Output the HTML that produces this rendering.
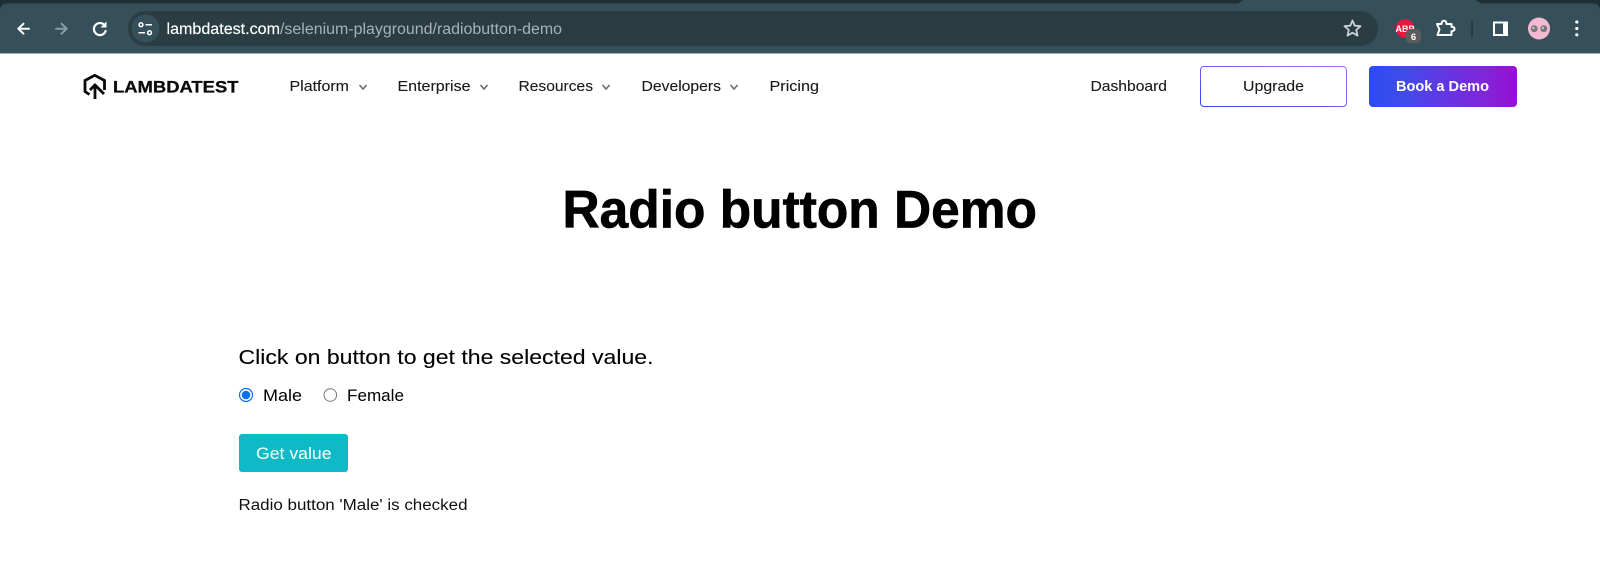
<!DOCTYPE html>
<html><head><meta charset="utf-8"><style>
html,body{margin:0;padding:0;background:#fff;width:1600px;height:564px;overflow:hidden}
svg{display:block}
text{font-family:"Liberation Sans",sans-serif}
</style></head><body>
<svg width="1600" height="564" viewBox="0 0 1600 564" xmlns="http://www.w3.org/2000/svg">
<defs>
<linearGradient id="g" x1="0" x2="1" y1="0" y2="0"><stop offset="0" stop-color="#2b4cf2"/><stop offset=".25" stop-color="#424bea"/><stop offset=".5" stop-color="#6236e3"/><stop offset=".75" stop-color="#7d28dc"/><stop offset="1" stop-color="#990ed2"/></linearGradient>
<linearGradient id="b" x1="0" x2="1" y1="1" y2="0"><stop offset="0" stop-color="#2b4cf2"/><stop offset=".55" stop-color="#7a5cf0"/><stop offset="1" stop-color="#b16be8"/></linearGradient>
</defs>
<rect width="1600" height="53" fill="#35505b"/>
<path d="M0 0H1243L1238 3.500H8Q0 3.500 0 11Z" fill="#1f3035"/>
<path d="M1475 0H1600V11Q1600 3.500 1592 3.500H1481Z" fill="#1f3035"/>
<rect y="52.500" width="1600" height="1" fill="#3f5963"/>
<rect x="128" y="11" width="1250" height="35" rx="17.500" fill="#2a3d43"/>
<circle cx="145.500" cy="28.500" r="14" fill="#35505b"/>
<g fill="none" stroke="#fff" stroke-width="2" stroke-linecap="round" stroke-linejoin="round">
<path d="M29 28.700H18.500M23.500 23.700L18.300 28.700L23.500 33.700"/>
<path d="M56 28.700H66.500M61.500 23.700L66.700 28.700L61.500 33.700" stroke="#8b9da3"/>
<path d="M104.600 25.300A6 6 0 1 0 105.600 31" stroke-width="2.200"/>
</g>
<path d="M106.500 21.500V27.500H100.500Z" fill="#fff"/>
<g fill="none" stroke="#fff" stroke-width="1.500">
<circle cx="141" cy="24.700" r="1.900"/><path d="M145.500 24.700H152M138.500 32.700H145"/><circle cx="149.500" cy="32.700" r="1.900"/>
</g>
<text x="166.500" y="34" font-size="15.300" fill="#fff" stroke="#fff" stroke-width=".15" textLength="113.500" lengthAdjust="spacingAndGlyphs">lambdatest.com</text>
<text x="280" y="34" font-size="15.300" fill="#a6b2b6" textLength="282" lengthAdjust="spacingAndGlyphs">/selenium-playground/radiobutton-demo</text>
<path d="M1352.500 20.500L1354.700 25.700L1360.500 26.200L1356.200 30L1357.500 35.600L1352.500 32.700L1347.500 35.600L1348.800 30L1344.500 26.200L1350.300 25.700Z" fill="none" stroke="#c9d1d4" stroke-width="1.800" stroke-linejoin="round"/>
<circle cx="1405" cy="28.500" r="9.300" fill="#e8173f"/>
<text x="1405" y="32" font-size="9" font-weight="700" fill="#fff" text-anchor="middle">ABP</text>
<rect x="1406" y="29" width="15" height="14" rx="4" fill="#5c5c5c"/>
<text x="1413.500" y="40" font-size="9.500" font-weight="700" fill="#fff" text-anchor="middle">6</text>
<path d="M1437 24H1441.500Q1441.800 20.800 1444 20.800Q1446.300 20.800 1446.500 24H1451.500V26.800Q1454.500 27 1454.500 29Q1454.500 31 1451.500 31.200V35H1437.500L1439.500 29.500Z" fill="none" stroke="#fff" stroke-width="2" stroke-linejoin="round"/>
<rect x="1471.300" y="20" width="1.500" height="17.500" fill="#22373e"/>
<rect x="1494" y="22.500" width="13" height="12.500" fill="none" stroke="#fff" stroke-width="2"/>
<rect x="1503" y="22.500" width="5" height="12.500" fill="#fff"/>
<circle cx="1539" cy="28.500" r="11" fill="#f3b9d1"/>
<circle cx="1534.200" cy="28.700" r="3.400" fill="#767676"/><circle cx="1543.800" cy="28.700" r="3.400" fill="#767676"/>
<circle cx="1533.500" cy="28" r="1.200" fill="#c8c8c8"/><circle cx="1543" cy="28" r="1.200" fill="#c8c8c8"/>
<circle cx="1576.800" cy="22" r="1.600" fill="#fff"/><circle cx="1576.800" cy="28.500" r="1.600" fill="#fff"/><circle cx="1576.800" cy="34.800" r="1.600" fill="#fff"/>

<path d="M89.500 94.500L85 91.500V80.500L94.700 75.300L104.500 80.500V90" fill="none" stroke="#0a0a0a" stroke-width="2.800" stroke-linejoin="miter"/>
<path d="M95 99V85.500M90 90L95 85L104 94" fill="none" stroke="#0a0a0a" stroke-width="2.800"/>
<text x="113" y="92.500" font-size="17" font-weight="700" fill="#0a0a0a" stroke="#0a0a0a" stroke-width=".3" textLength="125.500" lengthAdjust="spacingAndGlyphs">LAMBDATEST</text>

<rect x="1200.500" y="66.500" width="146" height="40" rx="3.500" fill="#fff" stroke="url(#b)" stroke-width="1"/>
<g font-size="15" fill="#1a1a1a" stroke="#1a1a1a" stroke-width=".12">
<text x="289.500" y="91" textLength="59.500" lengthAdjust="spacingAndGlyphs">Platform</text>
<text x="397.500" y="91" textLength="73" lengthAdjust="spacingAndGlyphs">Enterprise</text>
<text x="518.500" y="91" textLength="74.500" lengthAdjust="spacingAndGlyphs">Resources</text>
<text x="641.500" y="91" textLength="79.500" lengthAdjust="spacingAndGlyphs">Developers</text>
<text x="769.500" y="91" textLength="49.500" lengthAdjust="spacingAndGlyphs">Pricing</text>
<text x="1090.500" y="91" textLength="76.500" lengthAdjust="spacingAndGlyphs">Dashboard</text>
<text x="1243" y="91" textLength="61" lengthAdjust="spacingAndGlyphs">Upgrade</text>
</g>
<g fill="none" stroke="#6c6c6c" stroke-width="1.600">
<path d="M359.500 85L363 89L366.500 85"/><path d="M480.500 85L484 89L487.500 85"/><path d="M602.500 85L606 89L609.500 85"/><path d="M730.500 85L734 89L737.500 85"/>
</g>
<rect x="1369" y="66" width="148" height="41" rx="4" fill="url(#g)"/>
<text x="1396" y="91" font-size="15" font-weight="700" fill="#fff" textLength="93" lengthAdjust="spacingAndGlyphs">Book a Demo</text>

<text x="562.500" y="227.700" font-size="53" font-weight="700" fill="#000" stroke="#000" stroke-width=".7" textLength="474.500" lengthAdjust="spacingAndGlyphs">Radio button Demo</text>

<text x="238.500" y="364" font-size="20.500" fill="#000" stroke="#000" stroke-width=".1" textLength="415" lengthAdjust="spacingAndGlyphs">Click on button to get the selected value.</text>
<circle cx="246" cy="395" r="6.500" fill="#fff" stroke="#0b6ff5" stroke-width="1.200"/>
<circle cx="246" cy="395" r="4.300" fill="#0b6ff5"/>
<text x="263" y="401" font-size="16.500" fill="#000" textLength="39" lengthAdjust="spacingAndGlyphs">Male</text>
<circle cx="330.300" cy="395" r="6.300" fill="#fff" stroke="#767676" stroke-width="1"/>
<text x="347" y="401" font-size="16.500" fill="#000" textLength="57" lengthAdjust="spacingAndGlyphs">Female</text>
<rect x="239" y="434" width="109" height="38" rx="3" fill="#0ebac5"/>
<text x="256" y="459" font-size="17" fill="#fff" textLength="75.500" lengthAdjust="spacingAndGlyphs">Get value</text>
<text x="238.500" y="510" font-size="15.300" fill="#111" textLength="229" lengthAdjust="spacingAndGlyphs">Radio button 'Male' is checked</text>
</svg>
</body></html>
